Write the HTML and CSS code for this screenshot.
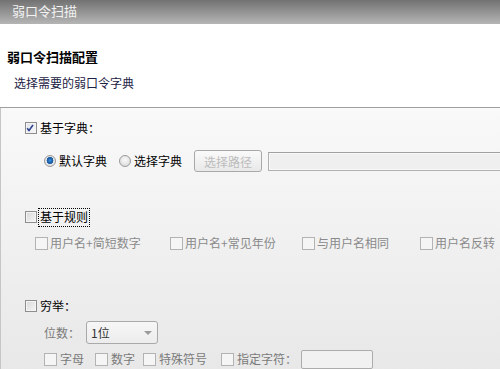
FILE: index.html
```html
<!DOCTYPE html>
<html lang="zh-CN">
<head>
<meta charset="utf-8">
<title>弱口令扫描</title>
<link rel="stylesheet" href="styles.css">
</head>
<body>
<div class="page">
  <div class="titlebar">弱口令扫描</div>
  <div class="header">
    <div class="h-title">弱口令扫描配置</div>
    <div class="h-sub">选择需要的弱口令字典</div>
  </div>
  <div class="content">
    <div class="row head r-dict">
      <span class="cb checked"><svg viewBox="0 0 12 12" width="12" height="12"><path d="M2.5 6.2 L4.8 9 L9.6 2.4" fill="none" stroke="#2b3f8f" stroke-width="1.8"/></svg></span>
      <span class="lbl">基于字典：</span>
    </div>
    <div class="row r-radios">
      <span class="rd on"></span><span class="lbl">默认字典</span>
      <span class="rd second"></span><span class="lbl">选择字典</span>
      <span class="btn">选择路径</span>
      <span class="path"></span>
    </div>

    <div class="row head r-rule">
      <span class="cb"></span>
      <span class="lbl focus">基于规则</span>
    </div>
    <div class="row r-rules">
      <div class="item"><span class="cb dis"></span><span class="lbl dim">用户名+简短数字</span></div>
      <div class="item"><span class="cb dis"></span><span class="lbl dim">用户名+常见年份</span></div>
      <div class="item"><span class="cb dis"></span><span class="lbl dim">与用户名相同</span></div>
      <div class="item"><span class="cb dis"></span><span class="lbl dim">用户名反转</span></div>
    </div>

    <div class="row head r-enum">
      <span class="cb"></span>
      <span class="lbl">穷举：</span>
    </div>
    <div class="row r-digits">
      <span class="lbl dim2">位数：</span>
      <span class="select"><span class="sel-text">1位</span><span class="arrow"></span></span>
    </div>
    <div class="row r-types">
      <span class="cb dis"></span><span class="lbl dim2 t1">字母</span>
      <span class="cb dis"></span><span class="lbl dim2 t2">数字</span>
      <span class="cb dis"></span><span class="lbl dim2 t3">特殊符号</span>
      <span class="cb dis"></span><span class="lbl dim2">指定字符：</span>
      <span class="chars"></span>
    </div>
  </div>
</div>
</body>
</html>
```

FILE: styles.css
```css
* { box-sizing: border-box; }
html, body { margin: 0; padding: 0; }
body {
  width: 500px;
  height: 369px;
  overflow: hidden;
  font-family: "Noto Sans CJK SC", "Noto Sans", sans-serif;
  font-size: 12px;
  color: #000;
  background: #fff;
}
.page { width: 500px; height: 369px; display: flex; flex-direction: column; overflow: hidden; }

.titlebar {
  height: 24px;
  flex: none;
  background: linear-gradient(#727272, #b5b5b5);
  color: #f2f2f2;
  font-size: 13px;
  line-height: 22px;
  padding-left: 12px;
}

.header {
  height: 84px;
  flex: none;
  background: #fff;
  border-bottom: 1px solid #9e9e9e;
  padding-top: 25px;
}
.h-title {
  font-weight: bold;
  font-size: 13px;
  line-height: 16px;
  padding-left: 7px;
}
.h-sub {
  margin-top: 10px;
  padding-left: 14px;
  line-height: 16px;
  color: #1c2244;
}

.content {
  flex: 1;
  background: linear-gradient(#f9f9f9, #e8e8e8);
  border-left: 1px solid #c6c6c6;
  padding-top: 12px;
  overflow: hidden;
}

.row { display: flex; align-items: center; white-space: nowrap; }
.lbl { line-height: 16px; }
.dim { color: #8a8a8a; }
.dim2 { color: #7a7a7a; }

.head { padding-left: 24px; height: 16px; }
.head .lbl { margin-left: 3px; }

.cb {
  width: 12px;
  height: 12px;
  flex: none;
  border: 1px solid #8e8e8e;
  background: linear-gradient(135deg, #d8d8d8, #f6f6f6);
  box-shadow: inset 0 0 0 1px #f4f4f4;
  display: inline-flex;
}
.cb svg { position: relative; left: -1px; top: -1px; }
.cb.checked { background: linear-gradient(135deg, #dfe3ea, #f8f8f8); }
.cb.dis {
  width: 13px;
  height: 13px;
  border-color: #b3b3b3;
  background: #f5f5f5;
  box-shadow: none;
}

.r-radios { margin-top: 14px; height: 22px; padding-left: 43px; }
.rd {
  width: 12px; height: 12px; flex: none;
  border-radius: 50%;
  border: 1px solid #9a9a9a;
  background: radial-gradient(circle at 50% 40%, #fafafa, #d4d4d4);
  margin-right: 3px;
}
.rd.on {
  background: radial-gradient(circle at 50% 45%, #3d8ee0 0, #1a5fa8 2.5px, #2560a0 3.3px, #e6e6e6 3.6px, #e0e0e0 6px);
}
.rd.second { margin-left: 12px; margin-right: 3px; }
.btn {
  margin-left: 12px;
  width: 68px;
  height: 22px;
  border: 1px solid #a8a8a8;
  border-radius: 3px;
  background: linear-gradient(#fafafa, #e9e9e9);
  color: #bcbcbc;
  display: flex; align-items: center; justify-content: center;
  flex: none;
}
.path {
  margin-left: 6px;
  width: 260px;
  height: 19px;
  flex: none;
  border: 1px solid #b0b0b0;
  border-top-color: #a0a0a0;
  background: #efefef;
  box-shadow: inset 0 0 0 1px #f8f8f8;
}

.r-rule { margin-top: 37px; }
.focus { outline: 1px dotted #000; outline-offset: 0; padding: 0 1px; margin-left: 2px !important; height: 17px; }

.r-rules {
  margin-top: 10px;
  height: 16px;
  padding-left: 34px;
  display: grid;
  grid-template-columns: 135px 132px 118px auto;
}
.item { display: flex; align-items: center; }
.item .lbl { margin-left: 2px; }

.r-enum { margin-top: 47px; }

.r-digits { margin-top: 7px; height: 23px; padding-left: 43px; }
.select {
  margin-left: 6px;
  width: 72px;
  height: 23px;
  border: 1px solid #a9a9a9;
  border-radius: 3px;
  background: linear-gradient(#f7f7f7, #ececec);
  display: flex; align-items: center; justify-content: space-between;
  padding: 0 5px 0 4px;
}
.sel-text { color: #333; }
.arrow {
  width: 0; height: 0;
  border-left: 4px solid transparent;
  border-right: 4px solid transparent;
  border-top: 4px solid #9a9a9a;
}

.r-types { margin-top: 6px; height: 18px; padding-left: 43px; }
.r-types .lbl { margin-left: 3px; }
.t1 { margin-right: 11px; }
.t2 { margin-right: 8px; }
.t3 { margin-right: 14px; }
.chars {
  margin-left: 4px;
  width: 72px;
  height: 19px;
  border: 1px solid #acacac;
  border-radius: 2px;
  background: #f1f1f1;
  flex: none;
}
```
